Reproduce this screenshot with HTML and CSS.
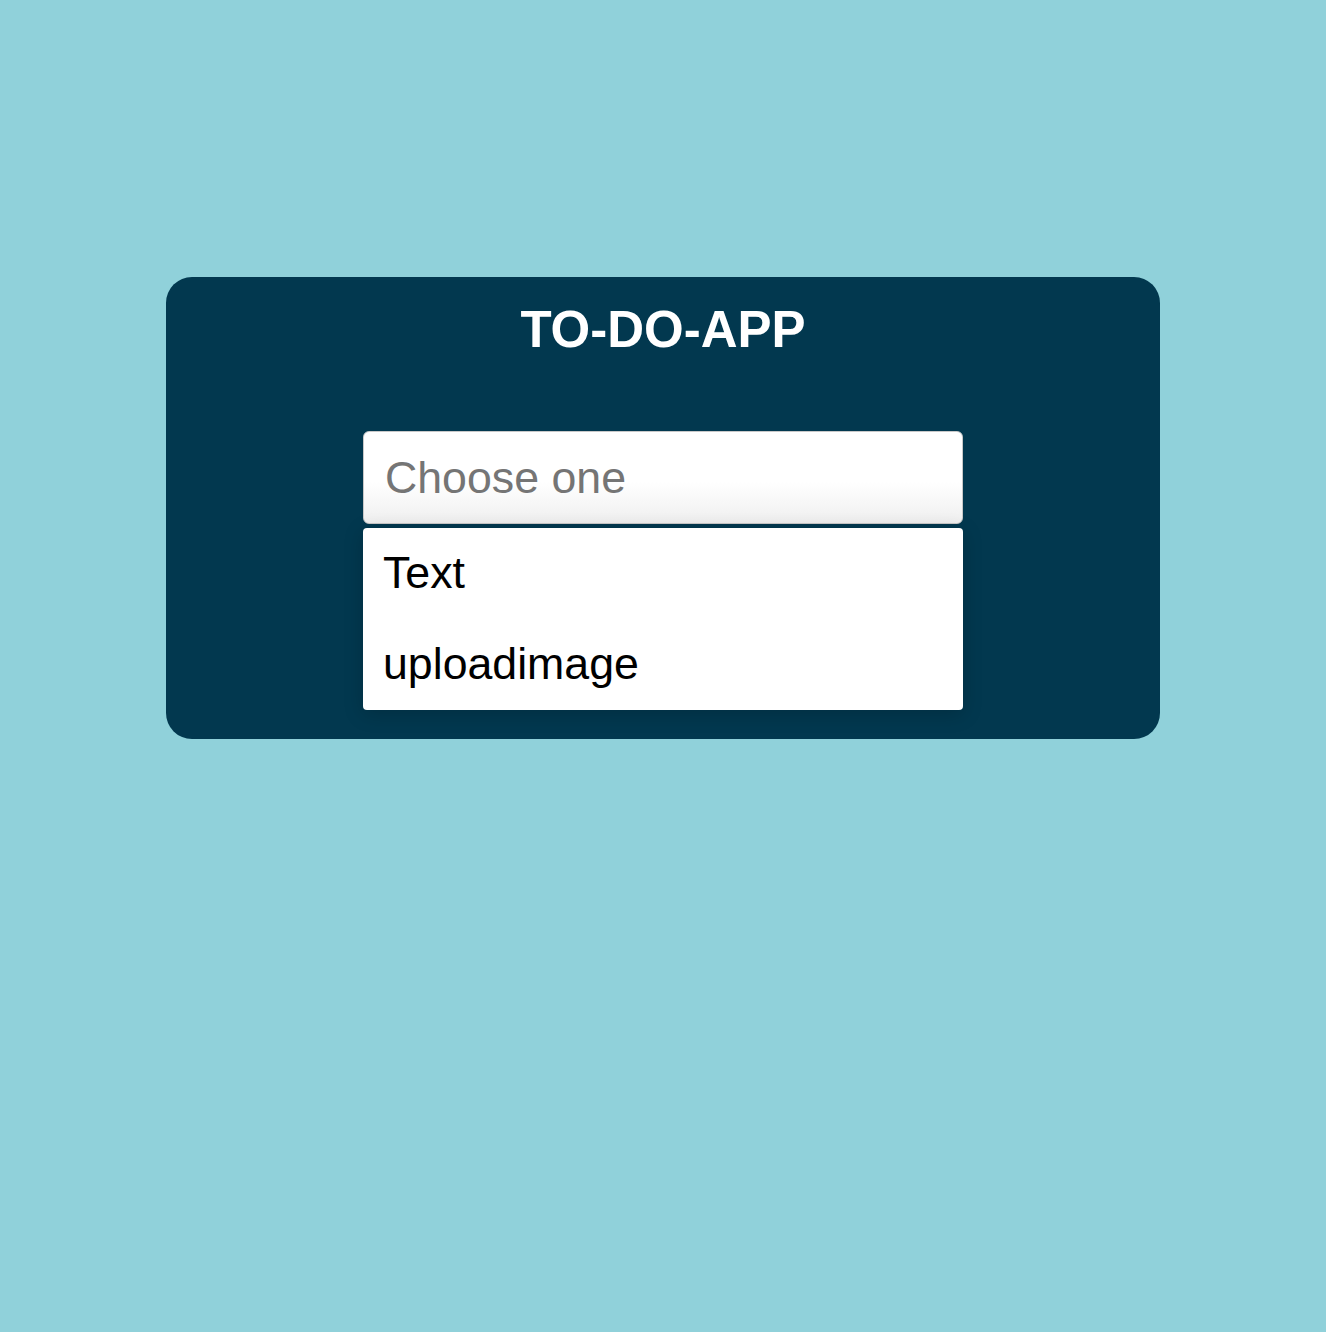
FILE: index.html
```html
<!DOCTYPE html>
<html lang="en">
<head>
<meta charset="utf-8">
<title>TO-DO-APP</title>
<link rel="stylesheet" href="styles.css">
</head>
<body>
<main class="card">
  <h1 class="title">TO-DO-APP</h1>
  <div class="picker">
    <div class="select">Choose one</div>
    <ul class="options">
      <li class="option">Text</li>
      <li class="option">uploadimage</li>
    </ul>
  </div>
</main>
</body>
</html>
```
FILE: styles.css
```css
html, body {
  margin: 0;
  padding: 0;
  background: #90d1da;
  font-family: "Liberation Sans", Arial, sans-serif;
}
body {
  min-height: 1332px;
  padding-top: 277px;
  box-sizing: border-box;
}
.card {
  width: 75%;
  margin: 0 auto;
  background: #02384f;
  border-radius: 26px;
  padding: 27px 0 29px;
  box-sizing: border-box;
  display: flex;
  flex-direction: column;
  align-items: center;
}
.title {
  margin: 0;
  color: #fff;
  font-size: 51px;
  line-height: 51px;
  font-weight: bold;
}
.picker {
  margin-top: 76px;
  width: 600px;
  display: flex;
  flex-direction: column;
  gap: 4px;
}
.select {
  height: 93px;
  box-sizing: border-box;
  border: 1px solid #c8c8c8;
  border-radius: 6px;
  background: linear-gradient(#ffffff 55%, #efefef);
  color: #757575;
  font-size: 44.7px;
  padding: 0 21px;
  display: flex;
  align-items: center;
}
.options {
  list-style: none;
  margin: 0;
  padding: 0;
  background: #fff;
  border-radius: 4px;
  box-shadow: 0 4px 20px rgba(0, 0, 0, 0.18);
}
.option {
  font-size: 44.7px;
  line-height: 50px;
  padding: 20px 20px;
  color: #000;
}
.option + .option {
  padding-top: 21px;
  padding-bottom: 21px;
}
```
